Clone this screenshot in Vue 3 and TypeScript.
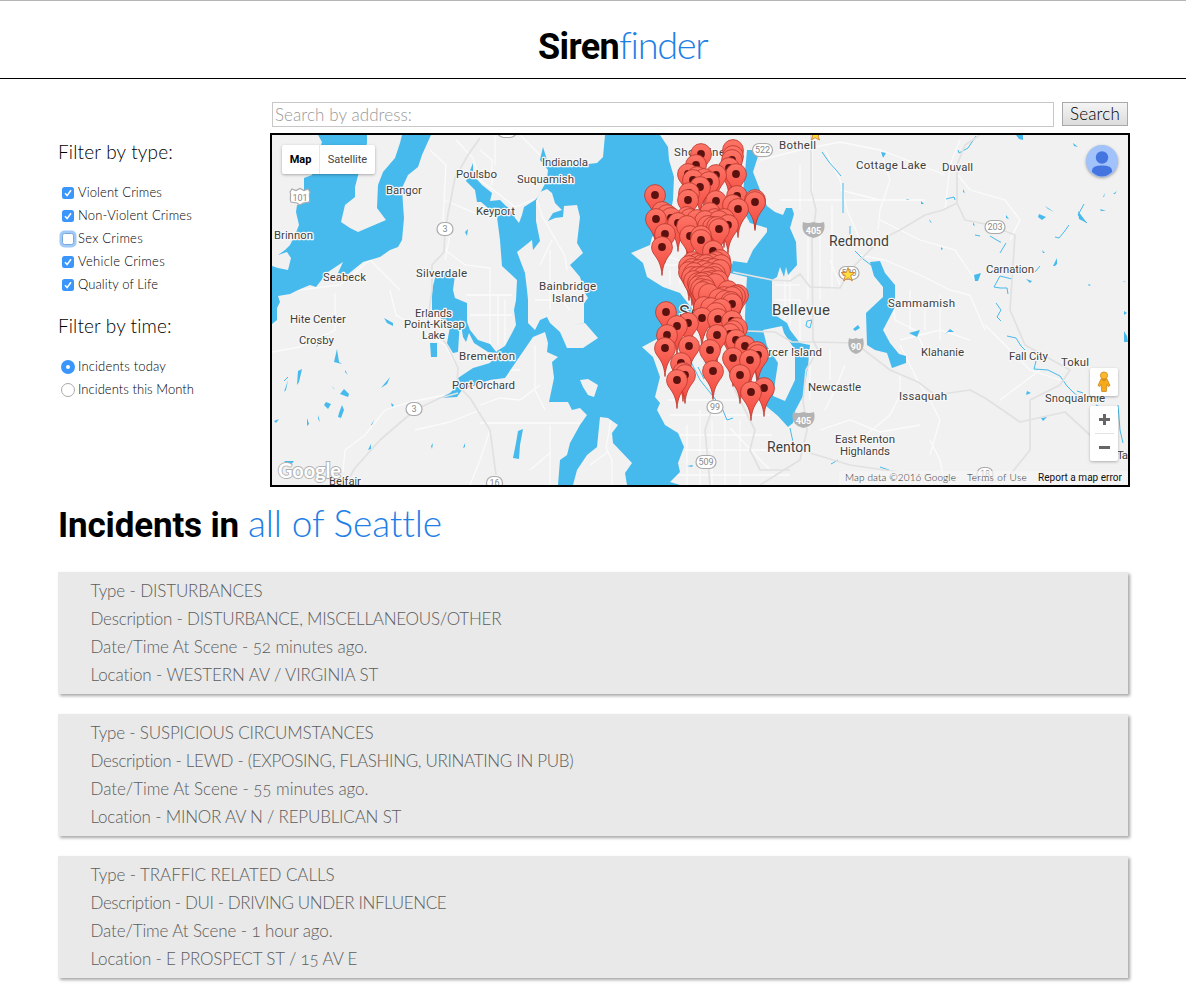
<script setup lang="ts">
import { reactive, ref, type Directive } from 'vue'

interface Filter { label: string; on: boolean; w: number; focused?: boolean }
interface Line { text: string; w: number }
type Point = [number, number]
interface Label { t: string; x: number; y: number; w: number; s?: number }

// Tracks the letters so that a run of text takes the given width.
const vFit: Directive<HTMLElement, number> = {
  mounted(el, binding) {
    const count = (el.textContent ?? '').length
    const natural = el.getBoundingClientRect().width
    if (count > 0) el.style.letterSpacing = `${((binding.value - natural) / count).toFixed(3)}px`
  },
}

const types = reactive<Filter[]>([
  { label: 'Violent Crimes', on: true, w: 84 },
  { label: 'Non-Violent Crimes', on: true, w: 114 },
  { label: 'Sex Crimes', on: false, w: 65, focused: true },
  { label: 'Vehicle Crimes', on: true, w: 87 },
  { label: 'Quality of Life', on: true, w: 80 },
])
const times = [
  { label: 'Incidents today', w: 88 },
  { label: 'Incidents this Month', w: 116 },
]
const time = ref(0)
const address = ref('')

const incidents: Line[][] = [
  [
    { text: 'Type - DISTURBANCES', w: 172 },
    { text: 'Description - DISTURBANCE, MISCELLANEOUS/OTHER', w: 411 },
    { text: 'Date/Time At Scene - 52 minutes ago.', w: 277 },
    { text: 'Location - WESTERN AV / VIRGINIA ST', w: 288 },
  ],
  [
    { text: 'Type - SUSPICIOUS CIRCUMSTANCES', w: 283 },
    { text: 'Description - LEWD - (EXPOSING, FLASHING, URINATING IN PUB)', w: 483 },
    { text: 'Date/Time At Scene - 55 minutes ago.', w: 278 },
    { text: 'Location - MINOR AV N / REPUBLICAN ST', w: 311 },
  ],
  [
    { text: 'Type - TRAFFIC RELATED CALLS', w: 244 },
    { text: 'Description - DUI - DRIVING UNDER INFLUENCE', w: 356 },
    { text: 'Date/Time At Scene - 1 hour ago.', w: 242 },
    { text: 'Location - E PROSPECT ST / 15 AV E', w: 267 },
  ],
]

const water: string[] = [
  'M318 135H367L367 143 360 168 355 187 355 197 345 205 341 222 350 228 358 232 386 220 377 208 378 185 383 172 395 158 400 143 402 135H431L426 146 422 155 418 167 408 175 402 188 403 205 404 218 402 240 398 247 390 250 380 257 363 262 347 275 338 273 343 262 328 272 323 278 316 287 310 285 298 290 290 294 278 296 280 302 277 308 277 320 272 324V266L278 268 288 270 291 258 287 252 278 255 285 250 290 245 295 235 299 225 296 212 297 205 309 202 304 190 304 178 312 175 322 142Z',
  'M605 135H660L668 147 669 160 674 177 673 200 668 225 652 237 650 245 631 253 643 263 647 277 663 287 680 293 693 310 690 325 655 340 642 347 653 357 660 377 655 397 660 403 657 410 665 425 678 433 684 447 678 463 680 472 670 482 680 485H627L625 473 632 463 613 443 612 433 618 425 608 418 600 417 597 447 587 455 577 470 573 485H558L560 460 567 455 570 443 580 425 587 415 580 408 572 410 568 402 549 402 554 378 552 362 558 357 547 352 548 343 545 332 533 337 505 378 490 380 462 390 457 397 440 398 450 393 460 383 458 378 473 368 490 363 497 351 505 346 512 333 516 325 514 310 516 300 517 280 502 266 500 240 497 217 488 208 481 202 477 202 475 190 466 181 473 163 473 175 482 185 492 193 490 201 500 200 506 206 512 210 515 218 519 223 522 215 524 207 535 200 538 197 547 180 548 170 540 160 543 147 547 160 558 163 580 165 597 163 603 157Z',
  'M437 270L455 275 453 290 455 298 467 303 467 322 470 330 478 340 490 344 497 353 488 352 474 343 469 333 466 342 463 337 460 319 458 352 453 353 447 343 450 327 432 310 432 290Z',
  'M747 150L760 150 753 172 760 190 767 206 775 212 783 215 786 208 792 208 794 214 790 228 796 242 797 265 788 275 786 267 784 277 780 267 777 277 772 280 772 313 787 323 790 330 800 343 810 345 808 366 803 396 795 411 793 423 788 427 778 416 766 406 758 395 755 372 747 350 745 317 746 293 747 277 730 273 733 261 747 263 753 250 767 232 767 228 750 223 743 210 743 193Z',
  'M870 262L880 261 885 273 895 285 895 307 883 330 890 343 899 354 906 356 906 363 892 368 887 353 875 350 867 345 866 313 883 297 883 287 874 276Z',
  'M430 343L437 343 437 357 431 357Z',
  'M518 431L523 429 520 445 519 459 513 458 516 443Z',
  'M326 402L331 404 328 409 324 405Z', 'M337 349L339 362 342 364 334 362Z', 'M298 371L302 369 299 382 297 385Z',
  'M342 405L344 410 341 418 338 417 339 413Z', 'M340 394L344 389 349 394 348 397Z', 'M384 318L393 323 393 326 387 323Z',
  'M381 388L390 377 387 384Z', 'M316 348L319 340 328 335 322 339Z', 'M332 386L335 390 333 388Z', 'M284 392L288 380 286 390Z',
  'M465 232L468 229 467 236Z', 'M463 448L465 443 465 447Z', 'M431 446L433 443 432 449Z', 'M307 418L309 424 307 426Z', 'M318 415L320 422 318 419Z',
  'M345 370L348 375 345 372Z', 'M371 425L374 420 372 425Z', 'M391 403L394 405 392 407Z', 'M274 421L279 419 276 423Z', 'M284 461L294 461 290 466Z', 'M368 450L371 444 371 449Z',
  'M881 152L886 153 883 158Z', 'M1016 135H1023L1023 140 1019 139Z', 'M1039 214L1046 217 1042 220 1038 217Z', 'M1053 266L1057 258 1057 264 1055 266Z',
  'M1045 206L1054 212 1048 209Z', 'M1078 211L1087 223 1079 219Z', 'M1100 209L1106 211 1101 211Z', 'M974 275L981 273 978 281 975 281Z',
  'M1026 279L1032 281 1030 283Z', 'M909 333L920 330 917 337 913 335Z', 'M945 334L950 329 954 332 948 332Z', 'M853 329L858 325 860 328 855 331Z',
  'M1027 391L1031 393 1026 395Z', 'M1041 418L1047 417 1043 421Z', 'M1124 311L1127 313 1124 315Z', 'M1124 331L1127 336 1128 342H1124Z', 'M1006 215L1009 219 1006 218Z',
  'M973 222L975 226 973 225Z', 'M963 189L965 193 963 192Z', 'M929 219L932 223 930 222Z', 'M921 201L924 204 921 204Z', 'M906 199L910 200 907 200Z', 'M941 247L943 249 941 250Z',
  'M1042 250L1045 253 1043 253Z', 'M1073 143L1078 147 1074 146Z', 'M1113 194L1117 191 1115 194Z', 'M1103 197L1105 193 1104 197Z', 'M1123 281L1126 282 1124 282Z', 'M1088 284L1091 285 1089 286Z',
  'M687 466L693 465 692 467Z',
]
const streams = [
  'M976 136L968 148 959 153 958 150', 'M822 152L829 162 836 170 841 176', 'M843 183V213', 'M850 226V235', 'M855 251L863 259 871 265',
  'M1084 204L1078 215 1087 223', 'M1069 225L1064 232 1059 238 1055 237', 'M990 236L1000 242 1001 242', 'M1006 243L1000 253', 'M975 235L980 236',
  'M1000 276L994 287 1000 288 1007 288 1008 294', 'M1000 276L1012 279', 'M1035 272L1040 266', 'M996 303L1001 310 997 317 1001 321',
  'M1007 336L1016 338 1021 346 1025 350', 'M1036 361L1034 369 1048 370 1060 376 1067 386 1073 392 1080 398', 'M1077 391L1083 393', 'M1096 405L1102 408', 'M1118 405L1120 430 1123 443',
  'M946 199L954 197 955 200', 'M807 321L812 320 810 328 806 326Z', 'M691 362L700 380 712 395 722 408 727 420 733 418', 'M790 428L793 442', 'M831 464L838 460', 'M880 467L889 470', 'M698 367L704 379', 'M284 381L288 377',
]
const minor = [
  'M430 150L446 165 443 220 450 235 445 260', 'M444 200L475 213 493 216', 'M400 290L370 260 340 285 300 290', 'M390 290L396 315 420 330 445 345 456 365', 'M335 293L335 330 300 347 272 352',
  'M445 395L410 402 385 410 365 435 345 450 343 472', 'M480 150L492 160 492 185', 'M495 135V165', 'M520 135L540 155',
  'M456 140L473 158 480 180 500 195 515 207 535 199', 'M445 250L465 265 490 268V345',
  'M498 295V345', 'M505 300V345', 'M470 315H512', 'M466 295H512', 'M480 423H580', 'M550 425V485', 'M530 470L550 453', 'M480 405L500 398 520 400 540 385', 'M490 380L505 370 520 370', 'M535 345V390L545 410',
  'M590 465L608 452', 'M611 420L606 448 612 460V485', 'M687 425V485', 'M700 410V485', 'M712 420V485', 'M725 420V485', 'M740 420V485', 'M670 415H770', 'M680 435H772', 'M685 450H775', 'M675 475H790', 'M668 400H760', 'M730 428L770 470',
  'M812 148V200', 'M825 150L840 180 847 210 860 240', 'M780 200H880', 'M760 160L800 150 840 142 880 150 920 165 945 175', 'M800 165V210', 'M808 230V300', 'M820 230V300', 'M832 205V290',
  'M840 190L880 200H925', 'M880 150L890 180 880 210 878 230', 'M880 220L920 240 955 250 975 280', 'M860 255L885 260 920 275 950 290 970 295 985 330', 'M893 300L895 320 915 330 925 350', 'M900 345L920 385 930 400 940 420 930 455',
  'M940 295V340', 'M925 300V330', 'M910 290V330', 'M800 300V340', 'M810 345V400', 'M830 350V380', 'M845 365L835 390 825 410', 'M900 340L940 330 970 340', 'M900 375L900 395 890 415 860 440', 'M840 285L830 260',
  'M1010 240L1020 220 1005 200 970 190 958 175', 'M985 325L1005 345 1030 370 1060 380', 'M1000 400L1040 370', 'M945 485L940 460 930 440', 'M820 430L850 420 880 432 920 425', 'M960 140L950 165 945 210',
  'M690 150V250', 'M715 160V260', 'M740 160V210', 'M665 255L690 265 700 280', 'M670 270V285', 'M680 270V285', 'M660 265H690', 'M775 285H800', 'M775 300H800', 'M785 280V320', 'M790 275V325',
  'M770 347H790', 'M415 430L450 422 480 410', 'M490 430L480 460 470 485',
]
const highways = [
  'M480 138L468 155 455 178 445 230 444 252 432 265 432 290 428 320 447 345 458 368 457 385 470 398 490 430 496 475',
  'M458 393L440 398 415 410 380 440 355 468 345 485', 'M811 135V190L816 210 812 240 813 340 818 350 806 370 803 400 807 430 800 460 760 485',
  'M733 272L772 280 790 281 800 274 810 287 840 288 850 270 880 240 900 230 925 215 943 210 957 203 957 165 965 145 980 135',
  'M957 203L965 220 990 225 1015 235 1012 280 1010 310 1025 345 1070 370 1060 385 1030 400 1030 450 1010 475 985 485',
  'M747 331L775 332 792 342 813 342 855 343 890 370 918 382 935 395 970 390 985 398 1020 422 1065 412 1090 435 1128 460',
  'M715 400L705 430 710 485', 'M728 370L735 390 755 430 750 450 760 470 790 470', 'M800 450L850 465 920 475 960 478', 'M700 340L708 380 715 395',
]

const labels: Label[] = [
  { t: 'Poulsbo', x: 456, y: 178, w: 41 }, { t: 'Indianola', x: 542, y: 166, w: 46 }, { t: 'Suquamish', x: 517, y: 183, w: 57 },
  { t: 'Bangor', x: 386, y: 194, w: 36 }, { t: 'Keyport', x: 476, y: 215, w: 39 }, { t: 'Brinnon', x: 274, y: 239, w: 39 },
  { t: 'Seabeck', x: 323, y: 281, w: 43 }, { t: 'Silverdale', x: 416, y: 277, w: 51 }, { t: 'Bainbridge', x: 539, y: 290, w: 57 },
  { t: 'Island', x: 552, y: 302, w: 32 }, { t: 'Hite Center', x: 290, y: 323, w: 56 }, { t: 'Crosby', x: 299, y: 344, w: 35 },
  { t: 'Erlands', x: 415, y: 317, w: 37 }, { t: 'Point-Kitsap', x: 404, y: 328, w: 61 }, { t: 'Lake', x: 422, y: 339, w: 23 },
  { t: 'Bremerton', x: 459, y: 360, w: 56 }, { t: 'Port Orchard', x: 452, y: 389, w: 63 }, { t: 'Belfair', x: 329, y: 485, w: 32 },
  { t: 'Shoreline', x: 674, y: 156, w: 51 }, { t: 'Bothell', x: 779, y: 149, w: 37 }, { t: 'Cottage Lake', x: 856, y: 169, w: 70 },
  { t: 'Duvall', x: 942, y: 171, w: 31 }, { t: 'Redmond', x: 829, y: 246, w: 60, s: 14 }, { t: 'Carnation', x: 986, y: 273, w: 48 },
  { t: 'Sammamish', x: 888, y: 307, w: 67 }, { t: 'Bellevue', x: 772, y: 315, w: 58, s: 15 }, { t: 'Klahanie', x: 921, y: 356, w: 43 },
  { t: 'Fall City', x: 1009, y: 360, w: 39 }, { t: 'Tokul', x: 1061, y: 366, w: 28 }, { t: 'Mercer Island', x: 752, y: 356, w: 70 },
  { t: 'Newcastle', x: 808, y: 391, w: 53 }, { t: 'Issaquah', x: 899, y: 400, w: 48 }, { t: 'Snoqualmie', x: 1045, y: 402, w: 60 },
  { t: 'Renton', x: 767, y: 452, w: 44, s: 14 }, { t: 'East Renton', x: 835, y: 443, w: 60 }, { t: 'Highlands', x: 840, y: 455, w: 50 },
  { t: 'Ta', x: 1117, y: 459, w: 11 }, { t: 'Seattle', x: 679, y: 318, w: 62, s: 18 },
]
const shields = [
  { t: '3', x: 445, y: 229, w: 16 }, { t: '3', x: 414, y: 409, w: 16 }, { t: '16', x: 494.5, y: 483, w: 16 }, { t: '', x: 507, y: 131, w: 19 },
  { t: '522', x: 762.5, y: 150, w: 20 }, { t: '203', x: 995, y: 227, w: 20 }, { t: '520', x: 849, y: 273, w: 20 }, { t: '99', x: 715, y: 407, w: 16 }, { t: '509', x: 706, y: 462, w: 20 },
  { t: '18', x: 985, y: 474, w: 16 },
]
const interstates = [
  { t: '405', x: 813.5, y: 230, w: 23 }, { t: '90', x: 856, y: 346, w: 16 }, { t: '405', x: 803.5, y: 420, w: 23 },
]

const pins: Point[] = ([
  [701, 154], [733, 150], [733, 156], [732, 160], [696, 165], [729, 168], [736, 174], [688, 174], [697, 177], [693, 180], [716, 175], [709, 182], [704, 179], [700, 187],
  [655, 195], [689, 193], [688, 200], [737, 196], [716, 201], [755, 200], [755, 202], [733, 205], [738, 209], [662, 212], [667, 215], [656, 219], [671, 218], [678, 223],
  [687, 217], [690, 219], [697, 220], [710, 213], [687, 226], [705, 221], [715, 219], [719, 221], [724, 219], [728, 225], [665, 234], [708, 226], [713, 227], [717, 227], [719, 229], [690, 236], [701, 236], [701, 240], [662, 247], [713, 251],
  [693, 262], [697, 264], [702, 265], [706, 265], [711, 264], [716, 262], [720, 260], [721, 265], [689, 266], [692, 269], [708, 268], [714, 269], [720, 270], [689, 272], [699, 270], [704, 271], [694, 273],
  [709, 273], [715, 274], [692, 277], [698, 277], [703, 277], [709, 278], [714, 277], [694, 281], [698, 283], [702, 283], [706, 282], [712, 281], [699, 286], [704, 286], [701, 289], [706, 290], [715, 284], [718, 281], [703, 292], [709, 294],
  [728, 291], [738, 295], [735, 296], [724, 297], [732, 297], [719, 299], [725, 301], [731, 302], [732, 304], [704, 307], [711, 308], [721, 309], [716, 313],
  [666, 312], [702, 318], [718, 319], [732, 321], [688, 323], [677, 326], [737, 328], [733, 331], [667, 335], [717, 335], [730, 334], [736, 340], [689, 346], [745, 346], [665, 348], [710, 350],
  [757, 352], [758, 355], [733, 358], [750, 360], [681, 363], [713, 371], [685, 375], [683, 373], [740, 375], [677, 380], [764, 388], [751, 392],
] as Point[]).sort((a, b) => a[1] - b[1])

// Downtown pins are packed so tightly that their dots are left out.
const crowded = ([x, y]: Point): boolean =>
  (y > 255 && y < 303.5) || (y > 305 && y < 314 && x > 700) || (y > 212 && y < 228 && x > 680 && x < 727)
</script>

<template>
  <div class="page">
    <header class="masthead">
      <h1><b v-fit="81">Siren</b><span v-fit="87.5" class="accent">finder</span></h1>
    </header>

    <main>
      <section class="top">
        <aside>
          <h3><span v-fit="115">Filter by type:</span></h3>
          <ul>
            <li v-for="f in types" :key="f.label" @click="f.on = !f.on">
              <i class="box" :class="{ on: f.on, focused: f.focused }">
                <svg v-if="f.on" viewBox="0 0 12 12"><path d="M3 6.3 5.1 8.6 9 3.2" /></svg>
              </i>
              <span v-fit="f.w">{{ f.label }}</span>
            </li>
          </ul>
          <h3><span v-fit="114">Filter by time:</span></h3>
          <ul>
            <li v-for="(t, i) in times" :key="t.label" @click="time = i">
              <i class="radio" :class="{ on: time === i }"></i>
              <span v-fit="t.w">{{ t.label }}</span>
            </li>
          </ul>
        </aside>

        <div class="explore">
          <form class="search" @submit.prevent>
            <label class="field">
              <span v-if="!address" v-fit="137">Search by address:</span>
              <input v-model="address" type="text" />
            </label>
            <button type="submit"><span v-fit="50">Search</span></button>
          </form>

          <div class="map">
            <svg class="canvas" viewBox="272 135 856 350">
              <defs>
                <linearGradient id="pin" x1="0" y1="0" x2="0" y2="1">
                  <stop offset="0" stop-color="#fd7567" />
                  <stop offset="1" stop-color="#f2453b" />
                </linearGradient>
                <path id="marker" d="M0 28.500C-.7 17-4.500 12-8 7.200-9.700 4.800-10.400 2.400-10.400 0a10.400 10.400 0 0 1 20.800 0c0 2.400-.7 4.800-2.400 7.200C4.500 12 .7 17 0 28.500Z" fill="url(#pin)" stroke="#b9352b" stroke-width=".8" />
              </defs>
              <path v-for="(d, i) in minor" :key="'r' + i" :d="d" class="road" />
              <path v-for="(d, i) in water" :key="'w' + i" :d="d" class="water" />
              <path d="M580 380 588 379 598 385 594 397 588 395 583 387ZM763 330 782 326 784 333 795 350 795 380 785 401 773 396 778 363 767 346ZM572 325 585 323 598 338 583 348 567 348 560 332 550 323 547 317 540 320 535 330 528 323 528 300 527 290 525 273 517 252 532 240 533 250 540 241 536 221 536 201 540 192 547 189 552 193 555 203 562 210 553 213 548 221 555 218 563 217 564 206 577 205 580 217 577 243 583 253 570 265 580 277 585 293 588 298 584 303V323Z" class="land" />
              <path d="M537 200 542 216 553 235 565 256 567 270M552 240 540 265M550 250V310M535 300H575M545 280 570 310" class="road" />
              <path v-for="(d, i) in streams" :key="'s' + i" :d="d" class="stream" />
              <path v-for="(d, i) in highways" :key="'h' + i" :d="d" class="highway" />

              <g v-for="(s, i) in shields" :key="'n' + i" class="shield">
                <rect :x="s.x - s.w / 2" :y="s.y - 6.5" :width="s.w" height="13" rx="6.5" />
                <text v-if="s.t" :x="s.x" :y="s.y + 3.2">{{ s.t }}</text>
              </g>
              <g class="shield">
                <path d="M292 189 296 190.500 300 188.500 304 190.500 308 189 310 192C308 195 311 198 309 202L303 203 300 205 297 203 291 202C289 198 292 195 290 192Z" />
                <text x="300" y="200.500">101</text>
              </g>
              <g v-for="(s, i) in interstates" :key="'i' + i" class="interstate">
                <path :d="`M${s.x - s.w / 2 + 1} ${s.y - 8}Q${s.x - s.w / 4} ${s.y - 6} ${s.x} ${s.y - 8}Q${s.x + s.w / 4} ${s.y - 6} ${s.x + s.w / 2 - 1} ${s.y - 8}Q${s.x + s.w / 2 + 2} ${s.y + 5} ${s.x} ${s.y + 8}Q${s.x - s.w / 2 - 2} ${s.y + 5} ${s.x - s.w / 2 + 1} ${s.y - 8}Z`" />
                <text :x="s.x" :y="s.y + 4">{{ s.t }}</text>
              </g>
              <text v-for="l in labels" :key="l.t" class="place" :x="l.x" :y="l.y" :textLength="l.w" :font-size="l.s ?? 11.5">{{ l.t }}</text>

              <path d="M848 267.500 849.700 272.500H855L850.700 275.600 852.300 281 848 277.800 843.700 281 845.300 275.600 841 272.500H846.300Z" class="star" />
              <path d="M815 128 817 133 821 133 818 136 819.500 140 815 137.500 811.500 140 812.500 136Z" class="star" />
              <g v-for="(p, i) in pins" :key="'p' + i">
                <use href="#marker" :x="p[0]" :y="p[1]" />
                <circle v-if="!crowded(p)" :cx="p[0]" :cy="p[1]" r="3.9" class="dot" />
              </g>
              <text class="logo" x="278" y="478" textLength="63">Google</text>
            </svg>

            <div class="modes"><b>Map</b><span>Satellite</span></div>
            <div class="user">
              <svg viewBox="0 0 32 32"><circle cx="16" cy="12.500" r="6.200" /><path d="M6 27Q5 20.500 16 20.500T26 27Q16 36 6 27Z" /></svg>
            </div>
            <div class="pegman">
              <svg viewBox="0 0 14 22">
                <path d="M4 8 1 14.500 2.500 15.500 4 13.500 4.700 20.500H9.300L10 13.500 11.500 15.500 13 14.500 10 8Z" fill="#f6a91b" stroke="#c47c12" stroke-width=".7" />
                <circle cx="7" cy="4.500" r="3.600" fill="#fbb829" stroke="#c47c12" stroke-width=".7" />
                <path d="M4.500 8.500 7 10.500 9.500 8.500Z" fill="#d98b12" />
              </svg>
            </div>
            <div class="zoom"><i class="plus"></i><hr /><i class="minus"></i></div>
            <div class="legal">
              <span v-fit="111">Map data ©2016 Google</span><span v-fit="60">Terms of Use</span><span v-fit="84" class="report">Report a map error</span>
            </div>
          </div>
        </div>
      </section>

      <h2><b v-fit="181">Incidents in</b><span v-fit="193" class="accent">all of Seattle</span></h2>

      <article v-for="(card, i) in incidents" :key="i">
        <p v-for="line in card" :key="line.text"><span v-fit="line.w">{{ line.text }}</span></p>
      </article>
    </main>
  </div>
</template>

<style>
body { background: #fff; overflow: hidden; }
</style>

<style scoped>
* { box-sizing: border-box; margin: 0; padding: 0; }
.page { width: 1186px; height: 992px; overflow: hidden; font-family: Lato, "Open Sans", sans-serif; font-weight: 300; color: #000; }
span, b { white-space: nowrap; }
.masthead { height: 79px; border-top: 1px solid #b5b5b5; border-bottom: 1px solid #000; }
h1 { display: flex; align-items: baseline; margin-left: 538px; padding-top: 21px; font-size: 36px; line-height: 44px; font-weight: 300; }
h1 b, h2 b { font-family: Roboto, sans-serif; font-weight: 700; }
.accent { color: #1e7fe6; font-size: 38px; }
main { width: 1070px; margin-left: 58px; }
.top { display: flex; padding-top: 23px; height: 408px; }
aside { width: 212px; flex: none; padding-top: 36px; }
h3 { height: 28px; line-height: 28px; font-size: 19px; font-weight: 300; margin-bottom: 14px; }
ul { list-style: none; margin-bottom: 17px; }
li { display: flex; align-items: center; height: 23px; font-size: 13px; }
.box { width: 12px; height: 12px; margin: 3px 4px 0 4px; border-radius: 2.5px; border: 1px solid #9ab; background: #fff; }
.box.on { border: 0; background: #3a96fb; }
.box.focused { border-color: #78a8dc; box-shadow: 0 0 0 2.5px #a0caf8; }
.box svg { display: block; width: 12px; height: 12px; fill: none; stroke: #fff; stroke-width: 1.6; }
.radio { width: 14px; height: 14px; margin: 2px 3px 0; border-radius: 50%; border: 1px solid #aaa; background: #fff; }
.radio.on { border: 5px solid #3a96fb; }
.explore { width: 860px; flex: none; }
.search { display: flex; padding: 0 2px; height: 31px; }
.field { display: flex; width: 782px; height: 25px; border: 1px solid #c8c8c8; padding: 0 2px; margin-right: 8px; font-size: 17px; line-height: 23px; color: #999; }
.field input { flex: 1; min-width: 0; border: 0; outline: 0; background: none; font: inherit; }
button { display: flex; justify-content: center; width: 66px; height: 24px; border: 1px solid #a9a9a9; background: linear-gradient(#f4f4f4, #dcdcdc); font: 300 17px/21px Lato, sans-serif; color: #000; }
.map { position: relative; width: 860px; height: 354px; border: 2px solid #000; background: #f1f1f1; overflow: hidden; }
.canvas { display: block; width: 856px; height: 350px; font-family: Roboto, sans-serif; font-weight: 400; }
.water { fill: #46baec; }
.land { fill: #f1f1f1; }
.road { fill: none; stroke: #fbfbfb; stroke-width: 1.3; }
.stream { fill: none; stroke: #46baec; stroke-width: 1; }
.highway { fill: none; stroke: #e1e1e1; stroke-width: 1.7; stroke-linejoin: round; }
.place { fill: #404040; stroke: #f7f7f7; stroke-width: 2.5px; stroke-linejoin: round; paint-order: stroke; }
.dot { fill: #5b120e; }
.shield rect, .shield path { fill: #fff; stroke: #aaa; stroke-width: 1.2; }
.shield text { fill: #888; font-size: 9px; text-anchor: middle; }
.interstate path { fill: #b3b3b3; }
.interstate text { fill: #fff; font-size: 9px; font-weight: 700; text-anchor: middle; }
.star { fill: #ffe03b; stroke: #d6893a; stroke-width: 1; }
.logo { font-family: Lato, sans-serif; font-size: 20px; font-weight: 700; fill: #fff; stroke: #b0b0b0; stroke-width: 1.8px; paint-order: stroke; }
.modes { position: absolute; left: 10px; top: 10px; display: flex; height: 29px; background: #fff; border-radius: 2px; box-shadow: 0 1px 3px rgba(0, 0, 0, .3); font: 400 11px/29px Roboto, sans-serif; }
.modes b { width: 38px; text-align: center; font-weight: 700; border-right: 1px solid #e8e8e8; }
.modes span { width: 55px; text-align: center; color: #444; }
.user { position: absolute; left: 814px; top: 10px; width: 32px; height: 32px; border-radius: 50%; background: #a1c2fa; box-shadow: 0 1px 3px rgba(0, 0, 0, .35); overflow: hidden; }
.user svg { display: block; fill: #4374e0; }
.pegman, .zoom { position: absolute; left: 818px; width: 28px; background: #fff; border-radius: 2px; box-shadow: 0 1px 3px rgba(0, 0, 0, .28); }
.pegman { top: 233px; height: 28px; padding: 3px 7px; }
.pegman svg { display: block; width: 14px; height: 22px; }
.zoom { top: 271px; height: 55px; display: flex; flex-direction: column; align-items: center; justify-content: space-between; padding: 8px 4px; }
.zoom hr { width: 19px; border: 0; border-top: 1px solid #e3e3e3; }
.plus, .minus { display: block; width: 11px; height: 11px; background: linear-gradient(#666, #666) center / 11px 3px no-repeat; }
.plus { background: linear-gradient(#666, #666) center / 11px 3px no-repeat, linear-gradient(#666, #666) center / 3px 11px no-repeat; }
.legal { position: absolute; right: 0; bottom: 0; display: flex; gap: 11px; height: 14px; padding: 0 6px; background: rgba(245, 245, 245, .7); font-size: 10px; line-height: 13px; color: #333; }
.legal .report { font-family: Roboto, sans-serif; font-weight: 400; color: #111; }
h2 { display: flex; align-items: baseline; gap: 9px; height: 85px; padding-top: 14px; font-size: 35px; line-height: 44px; font-weight: 300; }
h2 .accent { font-size: 37px; }
article { width: 1070px; height: 122px; margin-bottom: 20px; padding: 5px 32px; background: #e9e9e9; box-shadow: 2px 2px 3px rgba(0, 0, 0, .35); }
p { height: 28px; line-height: 28px; font-size: 17px; color: #5c5c5c; font-feature-settings: "onum"; }
p span { margin-left: .5px; }
</style>
